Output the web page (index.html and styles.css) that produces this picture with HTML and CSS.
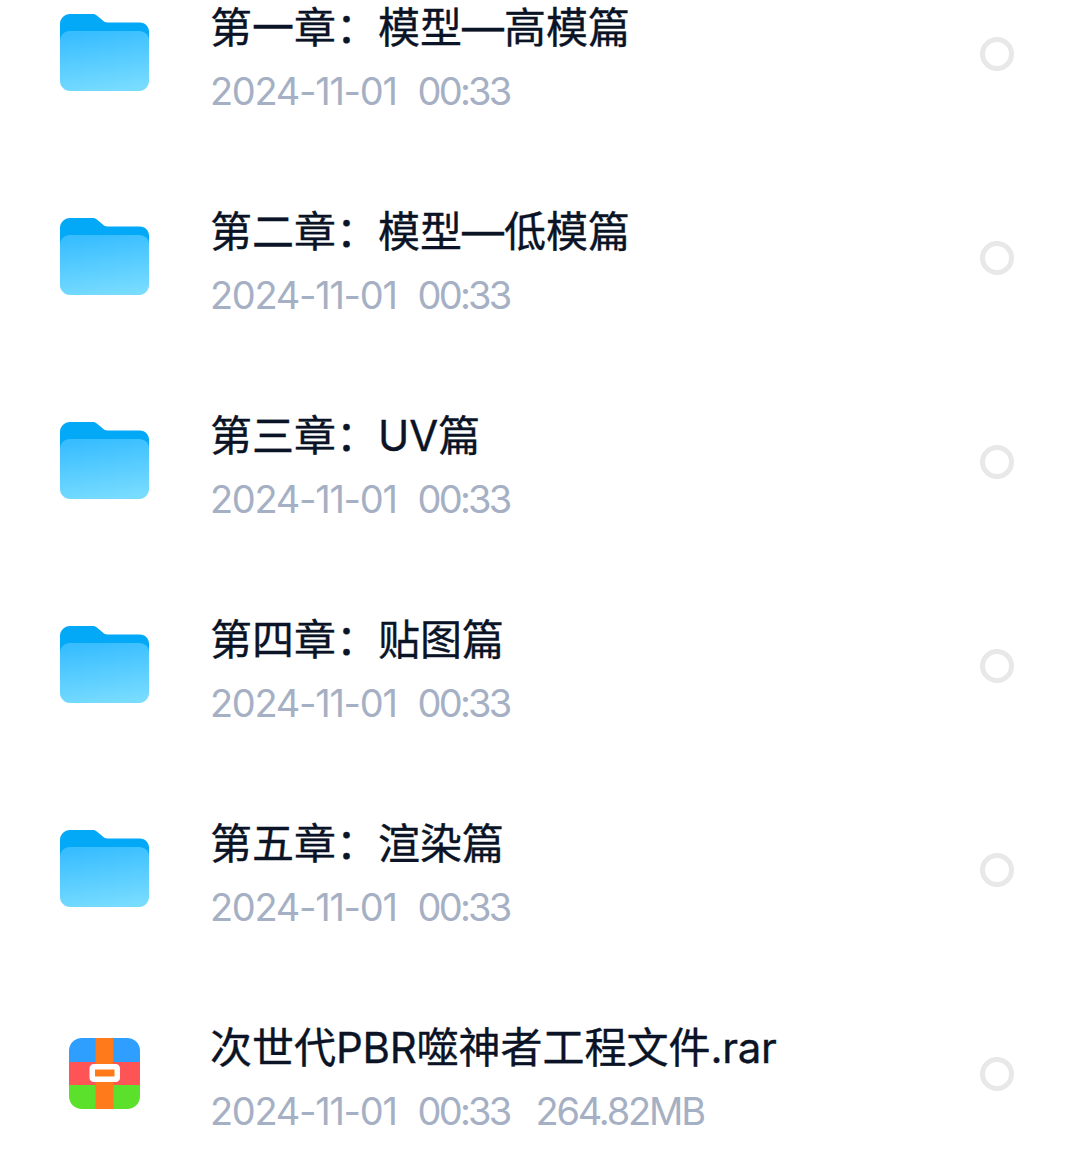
FILE: index.html
```html
<!DOCTYPE html>
<html lang="zh">
<head>
<meta charset="utf-8">
<title>文件列表</title>
<link rel="stylesheet" href="styles.css">
</head>
<body>
<svg class="defs" width="0" height="0" aria-hidden="true">
  <defs>
    <linearGradient id="folderFront" x1="0.4" y1="0" x2="0.6" y2="1">
      <stop offset="0" stop-color="#38BDFF"/>
      <stop offset="1" stop-color="#78DCFF"/>
    </linearGradient>
    <symbol id="folder" viewBox="0 0 89 77">
      <path d="M10 0H32C34.500 0 36 .6 37.800 2.200L42.500 6.200C44 7.500 45.500 8.500 47.500 8.500H80C85 8.500 89 12.500 89 17.500V40H0V10C0 4.500 4.500 0 10 0Z" fill="#03A9F7"/>
      <path d="M10 17H79C84.500 17 89 20.500 89 26V67C89 72.500 84.500 77 79 77H10C4.500 77 0 72.500 0 67V27C0 21 4.500 17 10 17Z" fill="url(#folderFront)"/>
    </symbol>
  </defs>
</svg>
<main class="list">
  <div class="row">
    <svg class="icon-folder"><use href="#folder"/></svg>
    <div class="info"><div class="name">第一章：模型—高模篇</div><div class="meta"><span class="date">2024-11-01</span><span class="time">00:33</span></div></div>
    <span class="radio"></span>
  </div>
  <div class="row">
    <svg class="icon-folder"><use href="#folder"/></svg>
    <div class="info"><div class="name">第二章：模型—低模篇</div><div class="meta"><span class="date">2024-11-01</span><span class="time">00:33</span></div></div>
    <span class="radio"></span>
  </div>
  <div class="row">
    <svg class="icon-folder"><use href="#folder"/></svg>
    <div class="info"><div class="name">第三章：UV篇</div><div class="meta"><span class="date">2024-11-01</span><span class="time">00:33</span></div></div>
    <span class="radio"></span>
  </div>
  <div class="row">
    <svg class="icon-folder"><use href="#folder"/></svg>
    <div class="info"><div class="name">第四章：贴图篇</div><div class="meta"><span class="date">2024-11-01</span><span class="time">00:33</span></div></div>
    <span class="radio"></span>
  </div>
  <div class="row">
    <svg class="icon-folder"><use href="#folder"/></svg>
    <div class="info"><div class="name">第五章：渲染篇</div><div class="meta"><span class="date">2024-11-01</span><span class="time">00:33</span></div></div>
    <span class="radio"></span>
  </div>
  <div class="row">
    <svg class="icon-rar" viewBox="0 0 71 71">
      <path d="M13 0H58C65.500 0 71 5.500 71 13V24H0V13C0 5.500 5.500 0 13 0Z" fill="#2E9FFF"/>
      <rect y="24" width="71" height="23" fill="#FF5455"/>
      <path d="M0 47H71V58C71 65.500 65.500 71 58 71H13C5.500 71 0 65.500 0 58Z" fill="#5BE02C"/>
      <rect x="26.500" width="18" height="71" fill="#FF7A1A"/>
      <rect x="23.250" y="28.750" width="25" height="12.500" rx="1.500" fill="#FF7A1A" stroke="#FFF" stroke-width="5.500"/>
    </svg>
    <div class="info"><div class="name">次世代<span class="latin">PBR</span>噬神者工程文件<span class="latin">.rar</span></div><div class="meta"><span class="date">2024-11-01</span><span class="time">00:33</span><span class="size">264.82MB</span></div></div>
    <span class="radio"></span>
  </div>
</main>
</body>
</html>
```

FILE: styles.css
```css
html, body {
  margin: 0;
  padding: 0;
  background: #fff;
}
body {
  height: 1153px;
  overflow: hidden;
  font-family: Inter, "Noto Sans CJK SC", sans-serif;
}
.defs {
  position: absolute;
}
.list {
  margin-top: -48px;
}
.row {
  height: 204px;
  display: flex;
  align-items: center;
  padding: 0 66px 0 60px;
}
.icon-folder {
  width: 89px;
  height: 77px;
  flex: none;
  margin-top: -3px;
}
.icon-rar {
  width: 71px;
  height: 71px;
  flex: none;
  margin: -2px 9px 0;
}
.info {
  flex: 1;
  min-width: 0;
  margin-left: 61px;
  padding-top: 8px;
}
.name {
  font-size: 42px;
  line-height: 50px;
  color: #0B1426;
  -webkit-text-stroke: 0.35px #0B1426;
  white-space: nowrap;
}
.latin {
  letter-spacing: -0.3px;
}
.meta {
  display: flex;
  gap: 21px;
  margin-top: 16px;
  font-size: 38px;
  line-height: 44px;
  color: #A6B0C4;
}
.date {
  letter-spacing: -1.3px;
}
.time {
  letter-spacing: -2.800px;
}
.size {
  margin-left: 5px;
  letter-spacing: -2.200px;
}
.radio {
  width: 34px;
  height: 34px;
  box-sizing: border-box;
  border: 5px solid #E8E8E8;
  border-radius: 50%;
  flex: none;
}
```
